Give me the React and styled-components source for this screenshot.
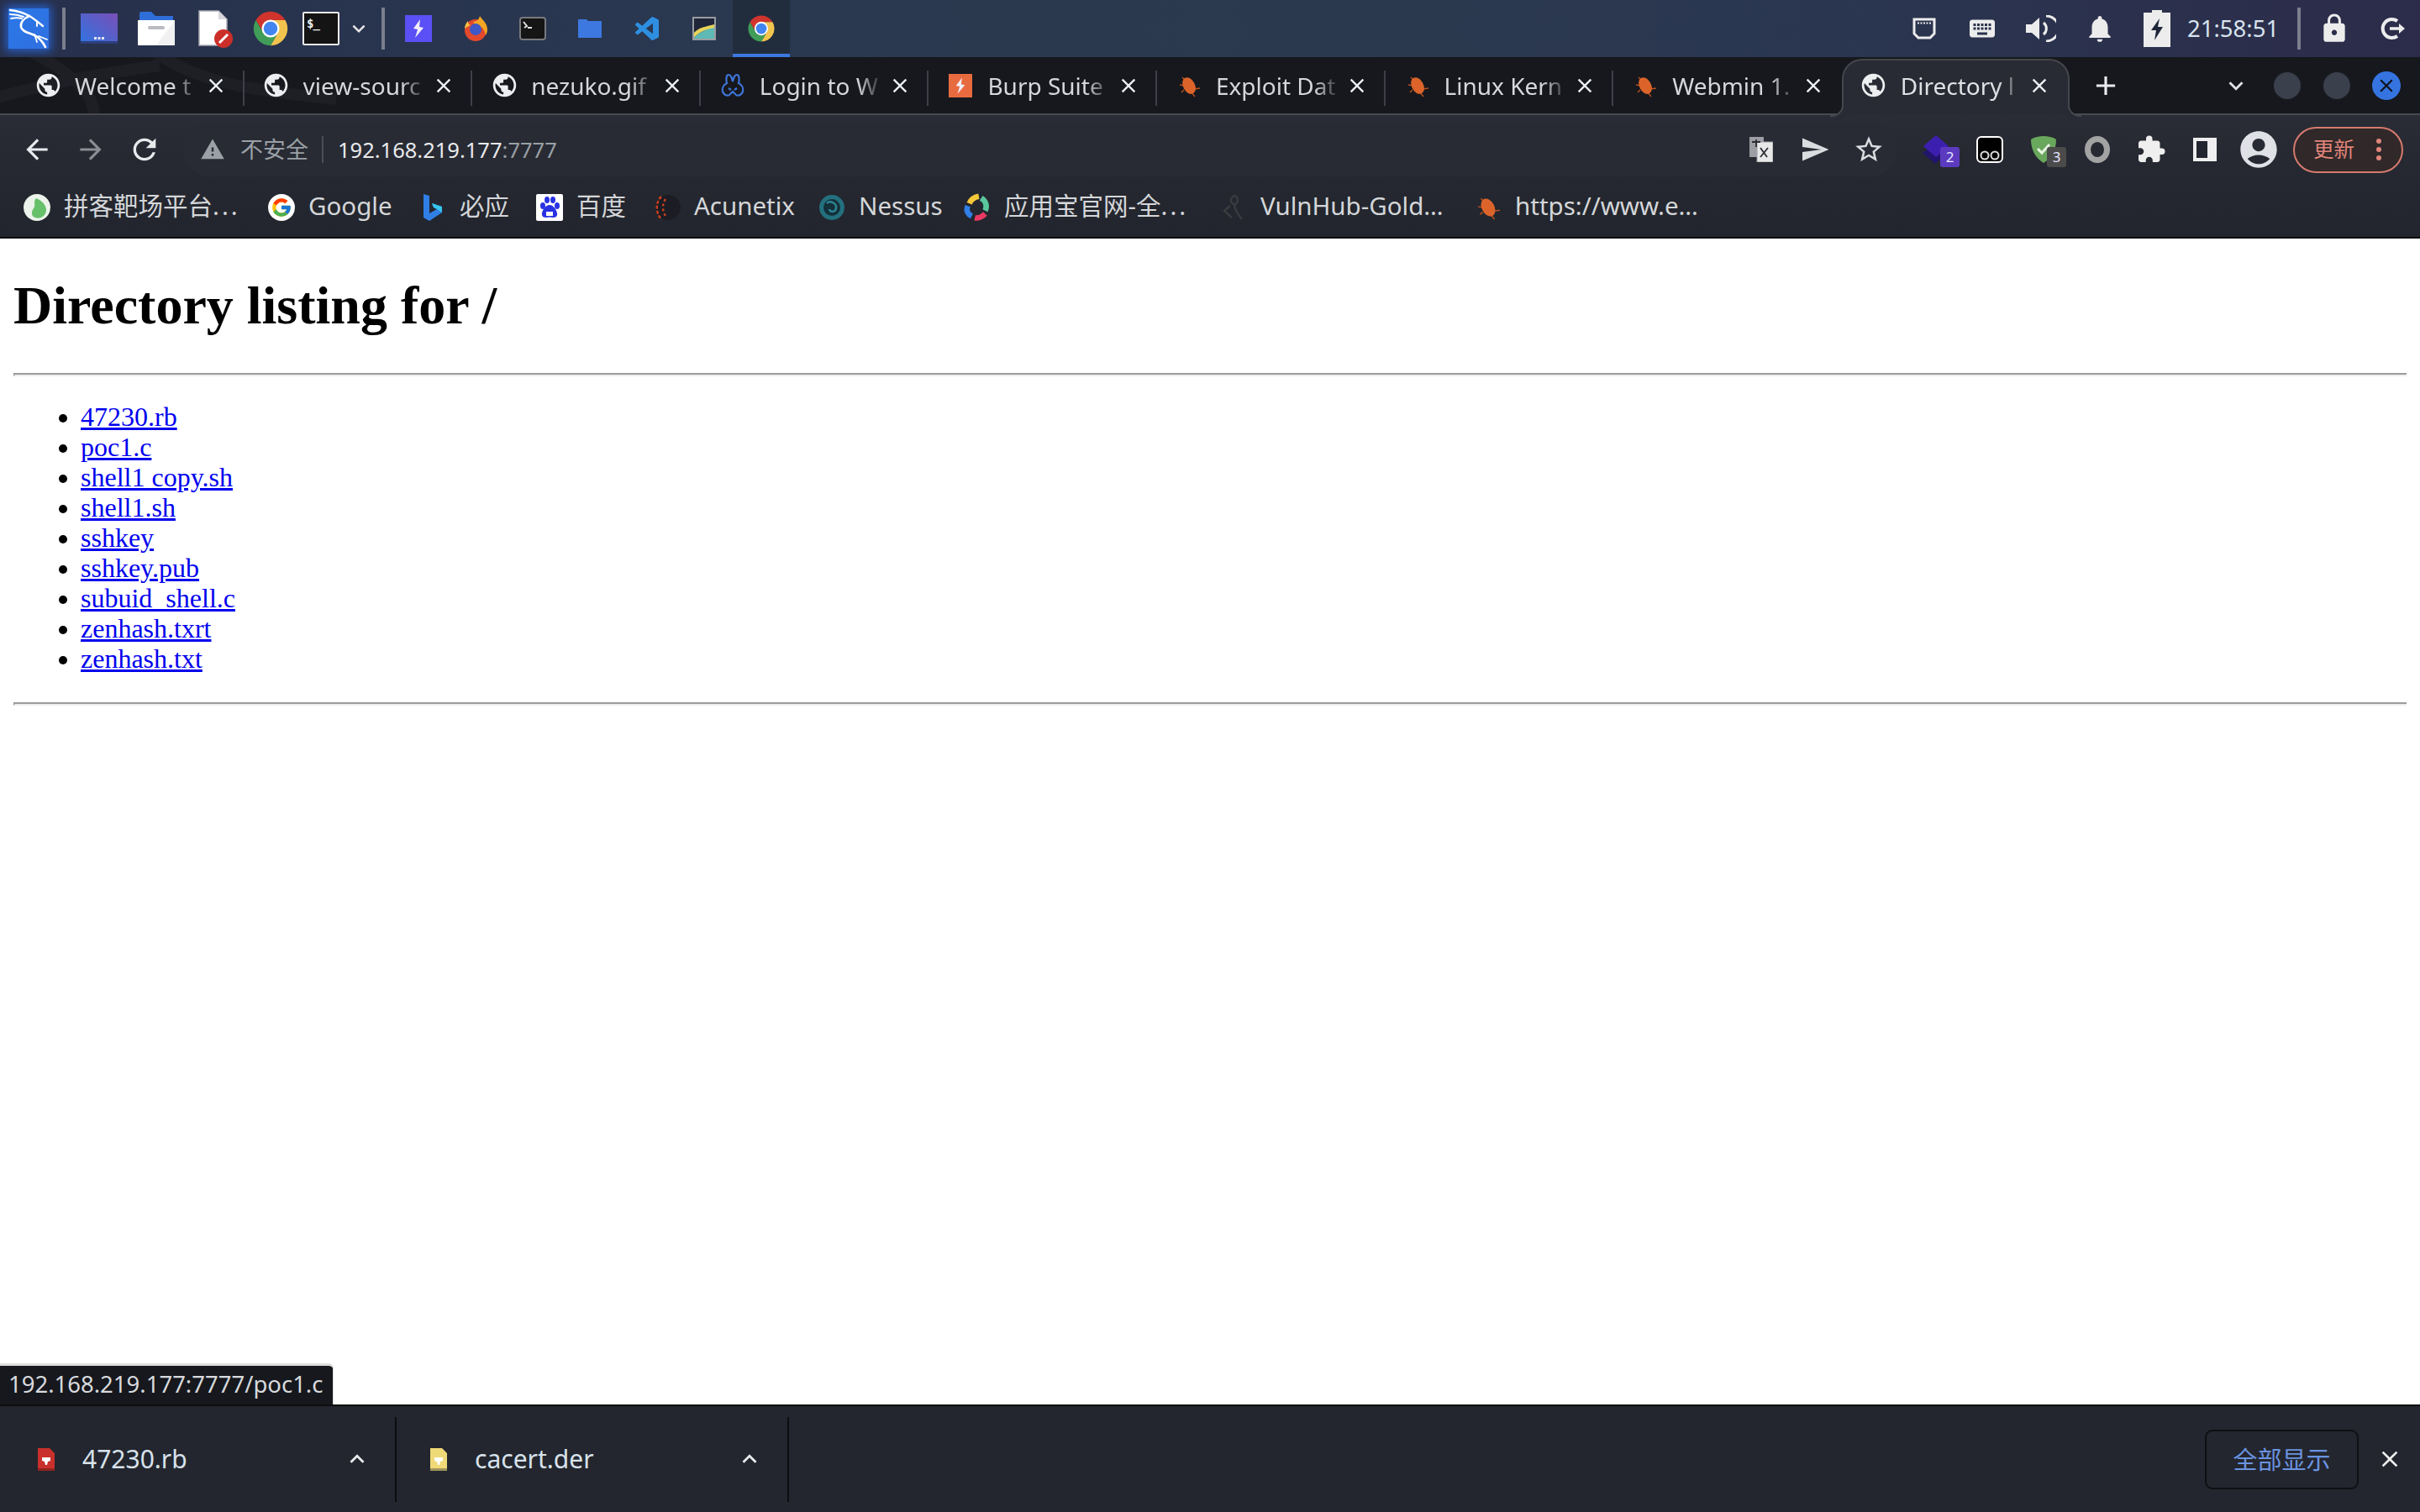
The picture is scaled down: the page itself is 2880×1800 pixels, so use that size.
import React from 'react';
import styled, { createGlobalStyle } from 'styled-components';
import { MdArrowBack, MdArrowForward, MdRefresh, MdStarBorder, MdSend, MdExtension, MdClose, MdPublic, MdNotifications, MdLock, MdKeyboard, MdKeyboardArrowDown, MdKeyboardArrowUp, MdAdd, MdWarning, MdAccountCircle } from 'react-icons/md';
import { FcGoogle } from 'react-icons/fc';

const UI = '"Noto Sans","Noto Sans CJK SC",sans-serif';

const Global = createGlobalStyle`
  html, body { margin: 0; padding: 0; background: #fff; }
  * { box-sizing: border-box; }
`;

const Shell = styled.div`
  display: flex; flex-direction: column; height: 100vh; overflow: hidden; font-family: ${UI};
`;

/* ---------- desktop panel ---------- */
const Panel = styled.div`
  display: flex; align-items: stretch; height: 68px; flex: none;
  background: linear-gradient(90deg, #27304c 0%, #2a3850 30%, #2b3a4e 50%, #2a3650 75%, #2c2c4a 100%);
`;
const Cell = styled.div`
  display: flex; align-items: center; justify-content: center; flex: none; position: relative;
  width: ${p => p.$w || 68}px;
  padding-left: ${p => p.$pl || 0}px;
  background: ${p => (p.$active ? '#212d3d' : 'transparent')};
  border-bottom: ${p => (p.$active ? '4px solid #3d78e0' : '0')};
  padding-top: ${p => (p.$active ? '4px' : '0')};
`;
const PanelSep = styled.div`
  width: 4px; height: 50px; flex: none; align-self: center; background: #7b7f8e;
  margin: 0 ${p => p.$r ?? 6}px 0 ${p => p.$l ?? 6}px;
`;
const PanelSpacer = styled.div`flex: 1;`;
const Clock = styled.div`
  font-size: 27.5px; color: #d8e4ee; margin: 0 26px 0 2px; align-self: center; line-height: 1; width: 105px; text-align: center; white-space: nowrap;
`;
const KaliTile = styled.div`
  width: 48px; height: 48px; background: linear-gradient(135deg, #2b78e8, #2f6fe0);
  box-shadow: 0 0 10px 3px rgba(40,110,240,.75); display: flex;
`;
const TermTile = styled.div`
  width: ${p => p.$s || 44}px; height: ${p => p.$h || 40}px; background: #141414; color: #eee;
  border: 2px solid ${p => p.$b || '#eee'}; border-radius: 2px; font: 700 14px/1 "DejaVu Sans Mono", monospace;
  padding: 5px 0 0 3px; letter-spacing: -1px;
`;

/* ---------- tab strip ---------- */
const Strip = styled.div`
  display: flex; align-items: stretch; height: 69px; flex: none; padding-left: 19px; position: relative;
  background: #16181d; border-bottom: 2px solid #494a50;
`;
const Wallpaper = styled.svg`
  position: absolute; left: 0; top: 0; pointer-events: none;
`;
const Tab = styled.div`
  position: relative; display: flex; align-items: center; width: 271.6px; flex: none;
  padding: 0 20px 0 24px; height: ${p => (p.$active ? '69px' : '67px')}; font-size: 28px;
  color: ${p => (p.$active ? '#dfe1e5' : '#d5d7da')};
  ${p => p.$active && `
    background: #282b33; border: 2px solid #44464c; border-bottom: 0;
    border-radius: 24px 24px 0 0; margin-top: 2px; height: 67px; padding: 0 20px 6px 22px; z-index: 2;
    &::before, &::after { content: ''; position: absolute; bottom: 0; width: 14px; height: 14px; }
    &::before { left: -16px; border-bottom-right-radius: 14px; border: 2px solid #44464c; border-width: 0 2px 2px 0; box-shadow: 5px 5px 0 #282b33; bottom: -2px; }
    &::after { right: -16px; border-bottom-left-radius: 14px; border: 2px solid #44464c; border-width: 0 0 2px 2px; box-shadow: -5px 5px 0 #282b33; bottom: -2px; }
  `}
  ${p => p.$sep && `
    &::after { content: ''; position: absolute; right: 0; top: 16px; height: 42px; width: 2px; background: #3e4047; }
  `}
`;
const Fav = styled.span`
  display: flex; width: 28px; height: 28px; flex: none; align-items: center; justify-content: center; margin-right: 18px;
  svg { flex: none; }
`;
const TabTitle = styled.span`
  flex: 1; min-width: 0; white-space: nowrap; line-height: 40px;
  -webkit-mask-image: linear-gradient(90deg, #000 78%, transparent 98%);
  mask-image: linear-gradient(90deg, #000 78%, transparent 98%);
`;
const TabClose = styled.span`
  display: flex; width: 28px; flex: none; justify-content: center; color: #eceff3; margin-left: 3px;
`;
const NewTab = styled.span`
  display: flex; margin-left: 24px; align-self: center; color: #e8eaed; position: relative;
`;
const StripRight = styled.div`
  display: flex; align-items: center; margin-left: auto; padding-right: 23px; position: relative;
`;
const WinDot = styled.span`
  display: flex; align-items: center; justify-content: center; width: 34px; height: 34px; border-radius: 50%;
  background: ${p => (p.$blue ? '#3574e0' : '#3a404c')}; margin-left: ${p => p.$ml ?? 25}px; color: #10131a;
  box-shadow: ${p => (p.$blue ? 'none' : 'inset 0 0 0 1px #14161a')};
`;
const StripChevron = styled.span`display: flex; color: #e0e2e5; margin-right: 27px;`;

/* ---------- toolbar ---------- */
const Chrome = styled.div`
  flex: none; background: linear-gradient(180deg, #2a2d35 0%, #262931 35%, #22252d 100%); border-bottom: 2px solid #0b0c0f;
`;
const Toolbar = styled.div`
  display: flex; align-items: center; height: 82px; padding: 0 20px 0 12px;
`;
const NavBtn = styled.span`
  display: flex; width: 64px; justify-content: center; flex: none; color: ${p => (p.$dim ? '#8a8d93' : '#e8eaed')};
`;
const Omni = styled.div`
  flex: 1; height: 64px; margin: 0 13px; border-radius: 32px; background: #282b33;
  display: flex; align-items: center; padding: 0 3px 0 21px; font-size: 26px; min-width: 0;
`;
const Insecure = styled.span`
  display: flex; align-items: center; gap: 18px; color: #9aa0a6; padding-right: 16px; border-right: 2px solid #4a4d54; height: 32px; line-height: 32px; font-size: 27px;
`;
const Url = styled.span`color: #e8eaed; margin-left: 17px; flex: 1; font-size: 25.5px;`;
const Port = styled.span`color: #9aa0a6;`;
const OmniBtn = styled.span`
  display: flex; width: 64px; justify-content: center; flex: none; color: #dadce0;
`;
const ExtCell = styled.span`
  position: relative; display: flex; width: 64px; height: 64px; align-items: center; justify-content: center; flex: none; color: #efefef;
`;
const ExtBadge = styled.span`
  position: absolute; left: ${p => p.$l || 37}px; top: 29px; width: 23px; height: 24px; border-radius: 3px;
  background: ${p => p.$bg}; color: #e6e6ff; font-size: 17px; line-height: 24px; text-align: center;
`;
const UpdateBtn = styled.div`
  display: flex; align-items: center; width: 131px; height: 55px; margin-left: 9px; border: 2px solid #d67a6e; border-radius: 28px;
  background: #302829; color: #e0857a; font-size: 24.5px; padding-left: 22px; flex: none; gap: 25px; line-height: 1;
`;

/* ---------- bookmarks ---------- */
const Bookmarks = styled.div`
  display: flex; align-items: center; height: 63px; padding: 0 0 8px 28px;
`;
const Bookmark = styled.div`
  display: flex; align-items: center; gap: 16px; font-size: 29.5px; color: #d4d6d9; white-space: nowrap; flex: none; line-height: 40px;
  width: ${p => p.$w}px;
`;
const BmLabel = styled.span`margin-top: -4px;`;
const WideDots = styled.span`letter-spacing: 3px;`;
const BmIcon = styled.span`display: flex; width: 32px; height: 32px; flex: none; align-items: center; justify-content: center;`;

/* ---------- page ---------- */
const Page = styled.main`
  flex: 1; position: relative; padding: 0 16px; background: #fff; color: #000; min-height: 0; overflow: hidden;
  font: 32px/36px "Liberation Serif", serif;
`;
const Title = styled.h1`
  font: 700 64px/74px "Liberation Serif", serif; margin: 43px 0;
`;
const Rule = styled.hr`
  height: 0; margin: 0; border: 0; border-top: 2px solid #9c9c9c; border-bottom: 2px solid #eee; border-left: 2px solid #9c9c9c;
`;
const List = styled.ul`
  margin: 30px 0 34px; padding-left: 80px; list-style: disc;
`;
const Item = styled.li``;
const FileLink = styled.a`color: #0000ee; text-decoration: underline;`;
const Status = styled.div`
  position: absolute; left: 0; bottom: 0; height: 49px; width: 397px; padding-left: 10px;
  background: #16181d; border-top: 3px solid #dedede; border-right: 1px solid #dedede; border-top-right-radius: 6px; color: #d8dadd;
  font: 27.5px/44px ${UI}; white-space: nowrap; overflow: hidden;
`;

/* ---------- download shelf ---------- */
const Shelf = styled.div`
  display: flex; align-items: center; height: 128px; flex: none; background: #23262e; border-top: 2px solid #0c0d10;
  padding: 0 18px 0 5px; color: #d8e2ec;
`;
const Download = styled.div`
  display: flex; align-items: center; width: 467px; height: 101px; padding: 0 28px 0 40px; border-right: 2px solid #0c0d10; flex: none;
`;
const FileName = styled.span`flex: 1; margin-left: 33px; font-size: 30px; line-height: 40px;`;
const ShelfChevron = styled.span`display: flex; color: #e8eaed;`;
const ShowAll = styled.div`
  margin-left: auto; width: 183px; height: 71px; border: 2px solid #0f1014; border-radius: 9px; display: flex; align-items: center; justify-content: center;
  color: #6b93e0; font-size: 29px; line-height: 1;
`;
const ShelfClose = styled.span`display: flex; width: 36px; justify-content: center; margin-left: 19px; color: #efefef;`;

/* ---------- drawings ---------- */
const ChromeLogo = ({ s = 44 }) => (
  <svg width={s} height={s} viewBox="0 0 48 48">
    <path fill="#d0342c" d="M4.95 13A22 22 0 0 1 43.05 13H24A11 11 0 0 0 14.47 29.5Z" />
    <path fill="#f2c44d" d="M43.05 13H24A11 11 0 0 1 33.53 29.5L24 46A22 22 0 0 0 43.05 13Z" />
    <path fill="#3f9d57" d="M24 46A22 22 0 0 1 4.95 13L14.47 29.5A11 11 0 0 0 33.53 29.5Z" />
    <circle cx="24" cy="24" r="11.5" fill="#fff" />
    <circle cx="24" cy="24" r="9" fill="#4285f0" />
  </svg>
);
const Kali = () => (
  <svg width="48" height="48" viewBox="0 0 48 48" fill="none" stroke="#fff" strokeLinecap="round">
    <path strokeWidth="2.4" d="M2 2C10 3 18 5 25 9C30 12 35 16 41 21" />
    <path strokeWidth="2" d="M2 7C8 7 13 8 18 10M3 12C8 11 12 11 16 12M34 16L34 21" />
    <path strokeWidth="2.6" d="M25 9C18 12 14 17 15 22C16 28 25 29 31 32C37 35 41 40 44 46" />
    <path strokeWidth="1.8" d="M36 33L46 37M31 31L34 40" />
  </svg>
);
const Workspace = () => (
  <svg width="44" height="36" viewBox="0 0 44 36">
    <defs><linearGradient id="ws" x1="0" y1="1" x2="1" y2="0"><stop offset="0" stopColor="#2f74e0" /><stop offset="1" stopColor="#7a4fb8" /></linearGradient></defs>
    <rect width="44" height="36" fill="url(#ws)" />
    <rect y="33" width="44" height="3" fill="#2c3f7c" />
    <rect x="16" y="28" width="3" height="3" fill="#e6e6f0" /><rect x="20.5" y="28" width="3" height="3" fill="#e6e6f0" /><rect x="25" y="28" width="3" height="3" fill="#e6e6f0" />
  </svg>
);
const FilesIcon = () => (
  <svg width="44" height="40" viewBox="0 0 44 40">
    <path fill="#2f6ed8" d="M2 2a2 2 0 0 1 2-2h12l5 5h21v10H2Z" />
    <path fill="#f1f1f1" d="M0 10h44v30H0Z" />
    <path fill="#fff" d="M0 10h44L22 40H0Z" />
    <rect x="12" y="17" width="20" height="4" rx="2" fill="#b9bbc0" />
  </svg>
);
const DocIcon = () => (
  <svg width="42" height="45" viewBox="0 0 42 45">
    <path fill="#fff" stroke="#a9abb1" strokeWidth="1.5" d="M1 1H24L34 11V42H1Z" />
    <path fill="#d8d8dc" d="M24 1L34 11H24Z" />
    <circle cx="30" cy="34" r="11" fill="#cc2f2a" />
    <path stroke="#fff" strokeWidth="3" d="M25 39L35 29" />
  </svg>
);
const Bolt = ({ s, bg }) => (
  <svg width={s} height={s} viewBox="0 0 32 32">
    <rect width="32" height="32" fill={bg} />
    <path fill="#f3eefc" d="M18 5L10 16L15 17L12 27L22 15L17 14Z" />
  </svg>
);
const Firefox = () => (
  <svg width="30" height="30" viewBox="0 0 30 30">
    <circle cx="15" cy="17" r="13" fill="#e3492c" />
    <path fill="#f6a623" d="M20 0c2 4 9 8 9 16 0 3-1 5-2 7-1-6-4-10-8-11-4-1-6-3-7-5 3 0 7-2 8-7Z" />
    <path fill="#f4c042" d="M2 15c0-4 2-7 4-9 0 3 1 4 3 5-3 1-5 3-7 4Z" />
    <circle cx="15" cy="16" r="7" fill="#3e58c8" />
  </svg>
);
const Prompt = () => (
  <svg width="32" height="28" viewBox="0 0 32 28">
    <rect x="1" y="1" width="30" height="26" rx="3" fill="#151515" stroke="#77797e" strokeWidth="2" />
    <path stroke="#e4e4e4" strokeWidth="2" fill="none" d="M5 6L9 11L6 13M10 13H15" />
  </svg>
);
const PlainFolder = () => (
  <svg width="28" height="22" viewBox="0 0 28 22">
    <path fill="#3d78e0" d="M0 0H10L12 2H28V22H0Z" />
  </svg>
);
const VSCode = () => (
  <svg width="28" height="28" viewBox="0 0 24 24">
    <path fill="#2e8fe0" d="M23.15 2.587L18.21.21a1.494 1.494 0 0 0-1.705.29l-9.46 8.63-4.12-3.128a.999.999 0 0 0-1.276.057L.327 7.261A1 1 0 0 0 .326 8.74L3.899 12 .326 15.26a1 1 0 0 0 .001 1.479L1.65 17.94a.999.999 0 0 0 1.276.057l4.12-3.128 9.46 8.63a1.492 1.492 0 0 0 1.704.29l4.942-2.377A1.5 1.5 0 0 0 24 20.06V3.939a1.5 1.5 0 0 0-.85-1.352zm-5.146 14.861L10.826 12l7.178-5.448v10.896z" />
  </svg>
);
const ImageApp = () => (
  <svg width="28" height="28" viewBox="0 0 28 28">
    <rect width="28" height="28" fill="#9a9ca1" />
    <rect x="2" y="2" width="24" height="24" fill="#20263a" />
    <path fill="#e8d35a" d="M2 19C8 12 16 12 26 9V14C16 15 8 18 2 25Z" />
    <path fill="#5fb9b5" d="M2 25C8 18 16 15 26 13V26H2Z" />
  </svg>
);
const Net = () => (
  <svg width="28" height="26" viewBox="0 0 28 26" fill="none" stroke="#ececec" strokeWidth="3">
    <path d="M2 2H26V19L21 24H7L2 19Z" />
    <path strokeWidth="2" strokeDasharray="2 1.5" d="M6 6.5H22" />
  </svg>
);
const Volume = () => (
  <svg width="36" height="32" viewBox="0 0 36 32" fill="#ececec">
    <path d="M0 11H7L16 3V29L7 21H0Z" />
    <path fill="none" stroke="#ececec" strokeWidth="3" d="M21 9A9 9 0 0 1 21 23M24 1A15 15 0 0 1 24 31" />
  </svg>
);
const Battery = () => (
  <svg width="32" height="44" viewBox="0 0 32 44">
    <path fill="#ececec" d="M10 0H22V3H32V44H0V3H10Z" />
    <path fill="#20263a" d="M19 10L9 24H15L13 36L23 20H17Z" />
  </svg>
);
const Logout = () => (
  <svg width="30" height="28" viewBox="0 0 30 28" fill="none" stroke="#ececec" strokeWidth="4">
    <path d="M21 5A11 11 0 1 0 21 23" />
    <path d="M12 14H26" strokeWidth="3.5" />
    <path fill="#ececec" stroke="none" d="M23 8L30 14L23 20Z" />
  </svg>
);
const Bug = ({ s = 28 }) => (
  <svg width={s} height={s} viewBox="0 0 28 28">
    <g stroke="#b9501f" strokeWidth="1.4">
      <path d="M6 4L11 9M3 13L9 14M20 18L27 17M17 22L21 27M8 19L5 22" />
    </g>
    <ellipse cx="14" cy="14" rx="7" ry="10.5" fill="#dc642a" transform="rotate(-28 14 14)" />
  </svg>
);
const Bunny = () => (
  <svg width="28" height="30" viewBox="0 0 28 30" fill="none" stroke="#3f74d8" strokeWidth="2.2">
    <path d="M9 2C6 2 6 8 7 12C3 14 1 18 2 22C4 27 9 28 11 25L14 22L17 25C19 28 24 27 26 22C27 18 25 14 21 12C22 8 22 2 19 2C16 2 15 6 14 10C13 6 12 2 9 2Z" />
    <path d="M9 18L12 20M19 18L16 20" />
  </svg>
);
const Egg = () => (
  <svg width="32" height="32" viewBox="0 0 32 32">
    <circle cx="16" cy="16" r="16" fill="#ecf3ea" />
    <path fill="#67c06a" d="M15 5C21 7 27 13 27 19C27 26 20 30 14 28C9 27 9 21 12 17C15 13 11 9 15 5Z" />
  </svg>
);
const Bing = () => (
  <svg width="24" height="32" viewBox="0 0 24 32">
    <path fill="#2f7fe6" d="M1 0L8 2V23L17 18L13 16L11 11L23 15V22L8 32L1 28Z" />
    <path fill="#36c5ec" d="M11 11L23 15V22L17 18L13 16Z" />
  </svg>
);
const Baidu = () => (
  <svg width="32" height="32" viewBox="0 0 32 32" fill="#2932e1">
    <rect width="32" height="32" fill="#fff" rx="2" />
    <ellipse cx="8" cy="14" rx="3" ry="4" /><ellipse cx="13" cy="7" rx="3" ry="4" /><ellipse cx="20" cy="7" rx="3" ry="4" /><ellipse cx="25" cy="14" rx="3" ry="4" />
    <path d="M16 13C11 13 6 21 7 25C8 29 13 28 16 27.5C19 28 24 29 25 25C26 21 21 13 16 13Z" />
    <rect x="12" y="21" width="8" height="5" fill="#fff" />
  </svg>
);
const Acunetix = () => (
  <svg width="32" height="32" viewBox="0 0 32 32">
    <circle cx="17" cy="16" r="15" fill="#1b1c24" />
    <path stroke="#c8401f" strokeWidth="2.5" strokeDasharray="4 2" fill="none" d="M9 3C2 10 2 22 9 30" />
    <path stroke="#c8401f" strokeWidth="2.5" strokeDasharray="3 3" fill="none" d="M14 6C10 12 10 20 14 26" />
  </svg>
);
const Nessus = () => (
  <svg width="32" height="32" viewBox="0 0 32 32">
    <circle cx="16" cy="16" r="15" fill="#23707f" />
    <circle cx="16" cy="16" r="10" fill="#14303a" />
    <path stroke="#2d8595" strokeWidth="2.5" fill="none" d="M10 11C14 7 22 11 21 17C20 22 14 22 13 18" />
  </svg>
);
const Yyb = () => (
  <svg width="34" height="34" viewBox="0 0 34 34" fill="none" strokeWidth="7">
    <path stroke="#f5c838" d="M7 12C9 7 13 4 19 3" />
    <path stroke="#59c79b" d="M22 5C28 9 30 15 27 21" />
    <path stroke="#e83a63" d="M27 25C23 29 18 31 14 30" />
    <path stroke="#2f7fe6" d="M10 28C4 25 3 20 5 15" />
  </svg>
);
const Vulnhub = () => (
  <svg width="28" height="32" viewBox="0 0 28 32" fill="none" stroke="#3a3b3f" strokeWidth="2.4">
    <path d="M16 2C10 2 9 12 15 12C20 12 20 4 16 2M15 12C15 20 20 24 24 30M10 14L3 20L12 28" />
  </svg>
);
const Diamond = () => (
  <svg width="32" height="34" viewBox="0 0 32 34">
    <path fill="#22156b" d="M15 10L30 21L15 34L0 21Z" />
    <path fill="#3d1fb0" d="M16 0L31 13L16 26L1 13Z" />
  </svg>
);
const Glasses = () => (
  <svg width="32" height="32" viewBox="0 0 32 32">
    <rect x="1" y="1" width="30" height="30" rx="5" fill="#000" stroke="#fff" strokeWidth="2" />
    <circle cx="10" cy="23" r="4.5" fill="none" stroke="#ddd" strokeWidth="2" />
    <circle cx="22" cy="23" r="4.5" fill="none" stroke="#ddd" strokeWidth="2" />
  </svg>
);
const Shield = () => (
  <svg width="30" height="32" viewBox="0 0 30 32">
    <path fill="#68a75c" d="M15 0C20 0 26 1 30 4C30 16 25 26 15 32C5 26 0 16 0 4C4 1 10 0 15 0Z" />
    <path fill="none" stroke="#e9f4e4" strokeWidth="3" d="M8 15L13 20L22 10" />
  </svg>
);
const Ring = () => (
  <svg width="30" height="32" viewBox="0 0 30 32">
    <ellipse cx="15" cy="16" rx="11.5" ry="12.5" fill="none" stroke="#a3a3a3" strokeWidth="7" />
  </svg>
);
const SidePanel = () => (
  <svg width="28" height="28" viewBox="0 0 28 28">
    <rect width="28" height="28" fill="#efefef" />
    <rect x="4" y="4" width="13" height="20" fill="#23262e" />
  </svg>
);
const FileBadge = ({ color, fold }) => (
  <svg width="20" height="27" viewBox="0 0 20 27">
    <path fill={color} d="M0 0H14L20 6V27H0Z" />
    <path fill={fold} d="M0 24H20V27H0Z" />
    <path fill="#fff" d="M5 11H15V15L12 16L11 20H9L8 16L5 15Z" />
  </svg>
);
const VerticalDots = () => (
  <svg width="8" height="30" viewBox="0 0 8 30" fill="#e0857a">
    <circle cx="4" cy="5" r="3" /><circle cx="4" cy="15" r="3" /><circle cx="4" cy="25" r="3" />
  </svg>
);

const favicons = {
  globe: <MdPublic size={33} color="#eceef0" />,
  bunny: <Bunny />,
  burp: <Bolt s={28} bg="#e86b3f" />,
  bug: <Bug />,
};

const tabs = [
  { icon: 'globe', title: 'Welcome t' },
  { icon: 'globe', title: 'view-sourc' },
  { icon: 'globe', title: 'nezuko.gif' },
  { icon: 'bunny', title: 'Login to W' },
  { icon: 'burp', title: 'Burp Suite' },
  { icon: 'bug', title: 'Exploit Dat' },
  { icon: 'bug', title: 'Linux Kern' },
  { icon: 'bug', title: 'Webmin 1.' },
  { icon: 'globe', title: 'Directory l', active: true },
];

const bookmarks = [
  { icon: <Egg />, label: '拼客靶场平台', dots: true, w: 291 },
  { icon: <FcGoogle size={32} style={{ background: '#fff', borderRadius: '50%', padding: 3 }} />, label: 'Google', w: 180 },
  { icon: <Bing />, label: '必应', w: 139 },
  { icon: <Baidu />, label: '百度', w: 140 },
  { icon: <Acunetix />, label: 'Acunetix', w: 196 },
  { icon: <Nessus />, label: 'Nessus', w: 173 },
  { icon: <Yyb />, label: '应用宝官网-全', dots: true, w: 305 },
  { icon: <Vulnhub />, label: 'VulnHub-Gold…', w: 303 },
  { icon: <Bug s={30} />, label: 'https://www.e…', w: 300 },
];

const files = ['47230.rb', 'poc1.c', 'shell1 copy.sh', 'shell1.sh', 'sshkey', 'sshkey.pub', 'subuid_shell.c', 'zenhash.txrt', 'zenhash.txt'];

export default function App() {
  return (
    <Shell>
      <Global />
      <Panel>
        <Cell><KaliTile><Kali /></KaliTile></Cell>
        <PanelSep />
        <Cell><Workspace /></Cell>
        <Cell><FilesIcon /></Cell>
        <Cell $pl={6}><DocIcon /></Cell>
        <Cell><ChromeLogo /></Cell>
        <Cell $w={52}><TermTile>$_</TermTile></Cell>
        <Cell $w={38}><MdKeyboardArrowDown size={30} color="#e6e6e6" /></Cell>
        <PanelSep $l={8} $r={6} />
        <Cell><Bolt s={32} bg="#5a50f5" /></Cell>
        <Cell><Firefox /></Cell>
        <Cell><Prompt /></Cell>
        <Cell><PlainFolder /></Cell>
        <Cell><VSCode /></Cell>
        <Cell><ImageApp /></Cell>
        <Cell $active><ChromeLogo s={34} /></Cell>
        <PanelSpacer />
        <Cell $w={69}><Net /></Cell>
        <Cell $w={70}><MdKeyboard size={36} color="#ececec" /></Cell>
        <Cell $w={70}><Volume /></Cell>
        <Cell $w={69}><MdNotifications size={38} color="#ececec" /></Cell>
        <Cell $w={68}><Battery /></Cell>
        <Clock>21:58:51</Clock>
        <PanelSep $l={0} $r={5} />
        <Cell $w={70}><MdLock size={38} color="#ececec" /></Cell>
        <Cell $w={67}><Logout /></Cell>
      </Panel>

      <Strip>
        <Wallpaper width="420" height="67" viewBox="0 0 420 67" fill="none" stroke="#1d1f25" strokeWidth="14">
          <path d="M-10 50C60 30 120 20 190 10M180 -10C230 30 300 40 400 50M30 -10C90 20 120 50 110 80" />
        </Wallpaper>
        {tabs.map((t, i) => (
          <Tab key={t.title} $active={t.active} $sep={!t.active && i < tabs.length - 2}>
            <Fav>{favicons[t.icon]}</Fav>
            <TabTitle>{t.title}</TabTitle>
            <TabClose><MdClose size={28} /></TabClose>
          </Tab>
        ))}
        <NewTab><MdAdd size={38} /></NewTab>
        <StripRight>
          <StripChevron><MdKeyboardArrowDown size={34} /></StripChevron>
          <WinDot $ml={0} />
          <WinDot />
          <WinDot $blue><MdClose size={26} /></WinDot>
        </StripRight>
      </Strip>

      <Chrome>
        <Toolbar>
          <NavBtn><MdArrowBack size={38} /></NavBtn>
          <NavBtn $dim><MdArrowForward size={38} /></NavBtn>
          <NavBtn><MdRefresh size={40} /></NavBtn>
          <Omni>
            <Insecure><MdWarning size={30} />不安全</Insecure>
            <Url>192.168.219.177<Port>:7777</Port></Url>
            <OmniBtn>
              <svg width="28" height="30" viewBox="0 0 28 30">
                <rect x="0" y="0" width="17" height="24" fill="#9c9ea3" />
                <rect x="9" y="6" width="19" height="24" fill="#e8e8e8" stroke="#9c9ea3" />
                <path d="M3 6H13M8 3V12M13 13L21 24M22 13L13 24" stroke="#2a2c31" strokeWidth="1.8" fill="none" />
              </svg>
            </OmniBtn>
            <OmniBtn><MdSend size={36} /></OmniBtn>
            <OmniBtn><MdStarBorder size={38} /></OmniBtn>
          </Omni>
          <ExtCell><Diamond /><ExtBadge $bg="#5c3ac0" $l={37}>2</ExtBadge></ExtCell>
          <ExtCell><Glasses /></ExtCell>
          <ExtCell><Shield /><ExtBadge $bg="#4b4b4b" $l={36}>3</ExtBadge></ExtCell>
          <ExtCell><Ring /></ExtCell>
          <ExtCell><MdExtension size={36} /></ExtCell>
          <ExtCell><SidePanel /></ExtCell>
          <ExtCell><MdAccountCircle size={52} color="#dfe1e6" /></ExtCell>
          <UpdateBtn>更新<VerticalDots /></UpdateBtn>
        </Toolbar>
        <Bookmarks>
          {bookmarks.map(b => (
            <Bookmark key={b.label} $w={b.w}>
              <BmIcon>{b.icon}</BmIcon>
              <BmLabel>{b.label}{b.dots && <WideDots>...</WideDots>}</BmLabel>
            </Bookmark>
          ))}
        </Bookmarks>
      </Chrome>

      <Page>
        <Title>Directory listing for /</Title>
        <Rule />
        <List>
          {files.map(f => <Item key={f}><FileLink href={`#${f}`}>{f}</FileLink></Item>)}
        </List>
        <Rule />
        <Status>192.168.219.177:7777/poc1.c</Status>
      </Page>

      <Shelf>
        <Download>
          <FileBadge color="#c9302c" fold="#8f2320" />
          <FileName>47230.rb</FileName>
          <ShelfChevron><MdKeyboardArrowUp size={34} /></ShelfChevron>
        </Download>
        <Download>
          <FileBadge color="#f0da78" fold="#a0935a" />
          <FileName>cacert.der</FileName>
          <ShelfChevron><MdKeyboardArrowUp size={34} /></ShelfChevron>
        </Download>
        <ShowAll>全部显示</ShowAll>
        <ShelfClose><MdClose size={32} /></ShelfClose>
      </Shelf>
    </Shell>
  );
}
